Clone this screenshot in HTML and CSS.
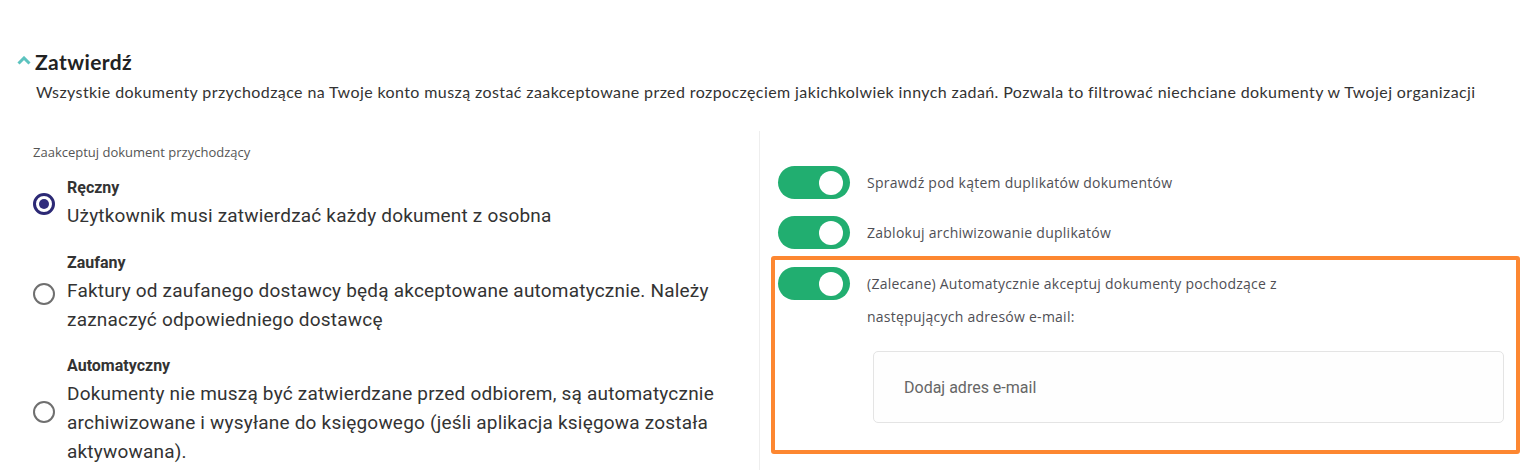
FILE: index.html
```html
<!DOCTYPE html>
<html>
<head>
    <meta charset="utf-8">
    <title>Zatwierdź</title>
    <link rel="stylesheet" href="styles.css">
</head>
<body>
    <div class="section">
        <div class="section-head">
            <svg class="chevron" width="14" height="9" viewBox="0 0 14 9">
                <path d="M1.5 7.5 L7 2 L12.5 7.5" fill="none" stroke="#5cc3bf" stroke-width="3"/>
            </svg>
            <h2>Zatwierdź</h2>
        </div>
        <p class="desc">Wszystkie dokumenty przychodzące na Twoje konto muszą zostać zaakceptowane przed rozpoczęciem jakichkolwiek innych zadań. Pozwala to filtrować niechciane dokumenty w Twojej organizacji</p>

        <div class="columns">
            <!-- lewa kolumna: sposób akceptacji -->
            <div class="col-left">
                <div class="field-label">Zaakceptuj dokument przychodzący</div>

                <label class="option">
                    <span class="radio checked"></span>
                    <span class="option-text">
                        <span class="option-title">Ręczny</span>
                        <span class="option-desc">Użytkownik musi zatwierdzać każdy dokument z osobna</span>
                    </span>
                </label>

                <label class="option">
                    <span class="radio"></span>
                    <span class="option-text">
                        <span class="option-title">Zaufany</span>
                        <span class="option-desc">Faktury od zaufanego dostawcy będą akceptowane automatycznie. Należy zaznaczyć odpowiedniego dostawcę</span>
                    </span>
                </label>

                <label class="option">
                    <span class="radio"></span>
                    <span class="option-text">
                        <span class="option-title">Automatyczny</span>
                        <span class="option-desc">Dokumenty nie muszą być zatwierdzane przed odbiorem, są automatycznie archiwizowane i wysyłane do księgowego (jeśli aplikacja księgowa została aktywowana).</span>
                    </span>
                </label>
            </div>

            <!-- prawa kolumna: przełączniki -->
            <div class="col-right">
                <div class="switch-row">
                    <span class="switch on"><span class="knob"></span></span>
                    <span class="switch-label">Sprawdź pod kątem duplikatów dokumentów</span>
                </div>
                <div class="switch-row">
                    <span class="switch on"><span class="knob"></span></span>
                    <span class="switch-label">Zablokuj archiwizowanie duplikatów</span>
                </div>

                <div class="highlight">
                    <div class="switch-row top">
                        <span class="switch on"><span class="knob"></span></span>
                        <div class="switch-body">
                            <span class="switch-label wrap">(Zalecane) Automatycznie akceptuj dokumenty pochodzące z następujących adresów e-mail:</span>
                            <div class="email-input">Dodaj adres e-mail</div>
                        </div>
                    </div>
                </div>
            </div>
        </div>
    </div>
</body>
</html>
```

FILE: styles.css
```css
body {
    margin: 0;
    padding: 0;
    background: #fff;
    color: #333;
    font-family: Lato, "Open Sans", sans-serif;
}

.section {
    padding: 50px 0 0 17px;
}

.section-head {
    display: flex;
    align-items: center;
    gap: 4px;
}

.chevron {
    display: block;
    margin-top: -4px;
}

.section-head h2 {
    margin: 0;
    font-size: 21px;
    line-height: 24px;
    font-weight: 700;
    letter-spacing: 0.4px;
    color: #222;
}

.desc {
    margin: 6px 0 0 19px;
    font-size: 16px;
    line-height: 24px;
    letter-spacing: 0.4px;
    color: #333;
}

.columns {
    display: grid;
    grid-template-columns: 760px 1fr;
    margin-top: 27px;
    margin-left: -17px;
}

/* lewa kolumna */
.col-left {
    padding: 13px 0 0 33px;
    border-right: 1px solid #eeeeee;
}

.field-label {
    font-family: "Open Sans", sans-serif;
    font-size: 13px;
    line-height: 17px;
    color: #555;
    margin-bottom: 17px;
}

.option {
    display: flex;
    align-items: center;
    gap: 12px;
    margin-bottom: 22px;
    font-family: Roboto, sans-serif;
}

.radio {
    flex: none;
    width: 22px;
    height: 22px;
    box-sizing: border-box;
    border: 2px solid #6f6f6f;
    border-radius: 50%;
    display: flex;
    align-items: center;
    justify-content: center;
}

.radio.checked {
    border: 3px solid #2c2975;
}

.radio.checked::after {
    content: "";
    width: 10px;
    height: 10px;
    border-radius: 50%;
    background: #312c7c;
}

.option-text {
    display: flex;
    flex-direction: column;
}

.option-title {
    font-size: 16px;
    line-height: 20px;
    font-weight: 700;
    color: #333;
    margin-bottom: 4px;
}

.option-desc {
    font-size: 19px;
    line-height: 28.8px;
    letter-spacing: 0.2px;
    color: #333;
    max-width: 660px;
}

/* prawa kolumna */
.col-right {
    padding: 35px 19px 0 18px;
}

.switch-row {
    display: flex;
    align-items: center;
    gap: 17px;
    margin-bottom: 17px;
}

.switch-row.top {
    align-items: flex-start;
    margin-bottom: 0;
}

.switch {
    flex: none;
    width: 72px;
    height: 33px;
    border-radius: 17px;
    background: #e0e0e0;
    display: flex;
    align-items: center;
    box-sizing: border-box;
    padding: 0 7px;
}

.switch.on {
    background: #21ae70;
    justify-content: flex-end;
}

.knob {
    width: 24px;
    height: 24px;
    border-radius: 50%;
    background: #fff;
}

.switch-label {
    font-family: "Open Sans", sans-serif;
    font-size: 14px;
    line-height: 33px;
    letter-spacing: 0.25px;
    color: #4f4f55;
}

.switch-label.wrap {
    display: block;
    max-width: 440px;
}

.highlight {
    margin: -10px 0 0 -7px;
    border: 4px solid #fd8731;
    border-radius: 3px;
    padding: 7px 12px 27px 3px;
}

.switch-body {
    flex: 1;
}

.email-input {
    margin: 18px 0 0 6px;
    height: 72px;
    box-sizing: border-box;
    border: 1px solid #e4e4e4;
    border-radius: 5px;
    background: #fefefe;
    padding-left: 30px;
    display: flex;
    align-items: center;
    font-family: Roboto, sans-serif;
    font-size: 16px;
    color: #666;
}
```
